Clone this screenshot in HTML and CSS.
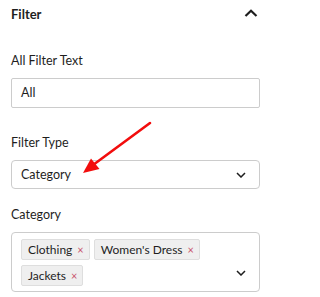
FILE: index.html
```html
<!DOCTYPE html>
<html>
<head>
<meta charset="utf-8">
<link rel="stylesheet" href="styles.css">
</head>
<body>
<div class="panel">
  <div class="header">
    <span class="title">Filter</span>
    <svg class="up" width="14" height="8" viewBox="0 0 14 8"><path d="M1.5 7 L7 1.8 L12.5 7" fill="none" stroke="#1e1e1e" stroke-width="2.2"/></svg>
  </div>
  <div class="field f1">
    <label class="label">All Filter Text</label>
    <div class="input">All</div>
  </div>
  <div class="field f2">
    <label class="label">Filter Type</label>
    <div class="input select">Category
      <svg class="down" width="10" height="6" viewBox="0 0 10 6"><path d="M1 1 L5 5 L9 1" fill="none" stroke="#1e1e1e" stroke-width="1.5"/></svg>
    </div>
  </div>
  <div class="field f3">
    <label class="label">Category</label>
    <div class="multi">
      <div class="tags">
        <span class="tag">Clothing<span class="x">×</span></span>
        <span class="tag">Women's Dress<span class="x">×</span></span>
        <span class="tag">Jackets<span class="x">×</span></span>
      </div>
      <svg class="down" width="10" height="6" viewBox="0 0 10 6"><path d="M1 1 L5 5 L9 1" fill="none" stroke="#1e1e1e" stroke-width="1.5"/></svg>
    </div>
  </div>
  <svg class="arrow" width="270" height="297" viewBox="0 0 270 297">
    <line x1="150" y1="123" x2="93" y2="165" stroke="#f20d0d" stroke-width="2.6" stroke-linecap="round"/>
    <polygon points="83,173 91,158.5 99.5,169" fill="#f20d0d"/>
  </svg>
</div>
</body>
</html>
```
FILE: styles.css
```css
html, body {
  margin: 0;
  padding: 0;
  background: #ffffff;
}
body {
  font-family: "Lato", "Noto Sans", sans-serif;
  color: #1e1e1e;
}
.panel {
  position: relative;
  width: 270px;
  height: 297px;
  padding: 0 10px 0 11px;
  box-sizing: border-box;
  overflow: hidden;
}
.header {
  display: flex;
  justify-content: space-between;
  align-items: center;
  padding-top: 4px;
  height: 20px;
}
.title {
  font-size: 13px;
  font-weight: 700;
  line-height: 20px;
}
.up {
  margin-right: 2px;
  margin-top: -2px;
}
.field {
  display: flex;
  flex-direction: column;
}
.f1 { margin-top: 28px; }
.f2 { margin-top: 26px; }
.f3 { margin-top: 17px; }
.label {
  font-size: 12.5px;
  line-height: 18px;
  margin-bottom: 8px;
}
.input {
  height: 30px;
  box-sizing: border-box;
  border: 1px solid #cccccc;
  border-radius: 2px;
  padding: 0 9px;
  font-size: 12.5px;
  line-height: 28px;
  display: flex;
  align-items: center;
}
.select {
  border-radius: 4px;
  justify-content: space-between;
  padding-right: 13px;
  height: 29px;
}
.multi {
  height: 60px;
  box-sizing: border-box;
  border: 1px solid #cccccc;
  border-radius: 4px;
  padding: 6px 13px 0 9px;
  display: flex;
  justify-content: space-between;
  align-items: flex-start;
}
.multi .down {
  margin-top: 31px;
}
.tags {
  display: flex;
  flex-wrap: wrap;
  gap: 5px 4px;
  flex: 1;
  margin-right: 8px;
}
.tag {
  display: inline-flex;
  align-items: center;
  height: 21px;
  box-sizing: border-box;
  background: #efefef;
  border: 1px solid #dedede;
  border-radius: 2px;
  padding: 0 5px 0 6px;
  font-size: 12px;
}
.x {
  color: #c9536b;
  font-size: 11px;
  margin-left: 5px;
}
.arrow {
  position: absolute;
  left: 0;
  top: 0;
  pointer-events: none;
}
```
